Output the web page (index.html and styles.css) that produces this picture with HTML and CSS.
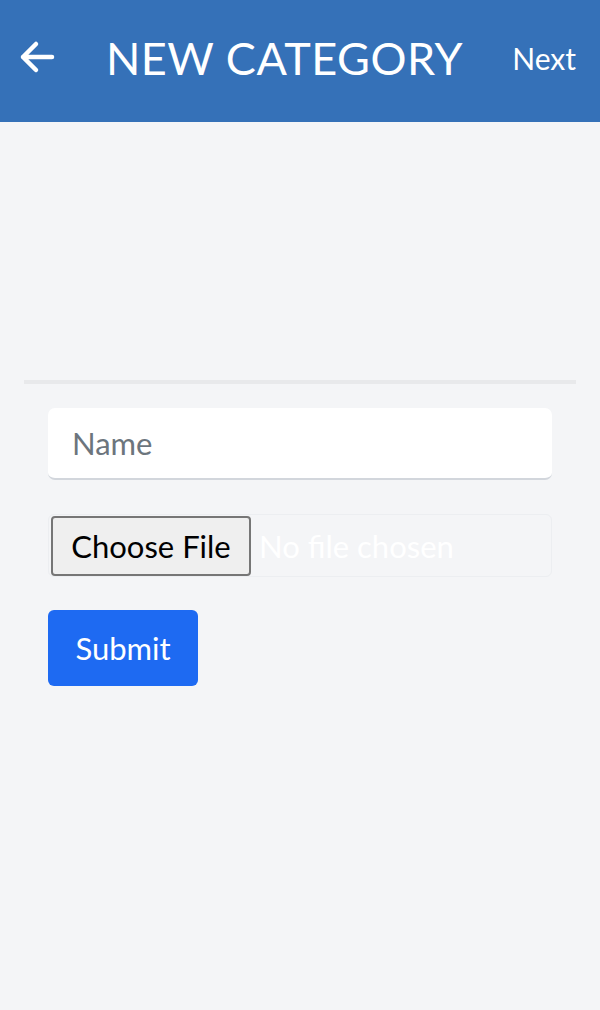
FILE: index.html
```html
<!DOCTYPE html>
<html>
<head>
<meta charset="utf-8">
<link rel="stylesheet" href="styles.css">
</head>
<body>
<header class="topbar">
  <span class="back">
    <svg width="36" height="34" viewBox="0 0 36 34"><path d="M33 17H4M17 4L4 17l13 13" fill="none" stroke="#fff" stroke-width="4.5" stroke-linecap="round" stroke-linejoin="round"/></svg>
  </span>
  <h1 class="title">NEW CATEGORY</h1>
  <span class="next">Next</span>
</header>
<main class="content">
  <div class="spacer"></div>
  <hr class="divider">
  <form class="form">
    <div class="field"><span class="placeholder">Name</span></div>
    <div class="file">
      <span class="file-btn">Choose File</span>
      <span class="file-text">No file chosen</span>
    </div>
    <div><span class="submit">Submit</span></div>
  </form>
</main>
</body>
</html>
```
FILE: styles.css
```css
html, body { margin: 0; padding: 0; }
body {
  background: #f4f5f7;
  font-family: Lato, "Open Sans", sans-serif;
  width: 600px;
  height: 1010px;
}
.topbar {
  height: 122px;
  background: #3571b8;
  display: flex;
  align-items: center;
  padding: 0 24px 0 19px;
  box-sizing: border-box;
  color: #fff;
}
.back { display: flex; width: 36px; height: 34px; margin-top: -8px; }
.title {
  margin: -6px 0 0 51px;
  font-weight: 400;
  font-size: 45px;
  letter-spacing: 0.5px;
  flex: 1;
}
.next { font-size: 30px; margin-top: -6px; }
.content { padding: 0 24px; }
.spacer { height: 258px; }
.divider {
  margin: 0;
  border: 0;
  height: 4px;
  background: #e8e9eb;
}
.form {
  padding: 24px 24px 0;
  display: flex;
  flex-direction: column;
}
.field {
  height: 70px;
  background: #fff;
  border-radius: 7px;
  border-bottom: 2px solid #d2d6dc;
  display: flex;
  align-items: center;
  padding-left: 24px;
}
.placeholder { font-size: 31px; color: #6c757d; }
.file {
  margin-top: 34px;
  height: 63px;
  border: 1px solid #eceef1;
  border-radius: 6px;
  box-sizing: border-box;
  display: flex;
  align-items: center;
  padding-left: 2px;
}
.file-btn {
  width: 200px;
  height: 60px;
  box-sizing: border-box;
  background: #efefef;
  border: 2px solid #767676;
  border-radius: 4px;
  font-size: 31px;
  color: #000;
  display: flex;
  align-items: center;
  justify-content: center;
}
.file-text { font-size: 31px; color: #fff; margin-left: 8px; }
.submit {
  margin-top: 33px;
  display: inline-flex;
  align-items: center;
  justify-content: center;
  width: 150px;
  height: 76px;
  background: #1e6af2;
  color: #fff;
  border-radius: 6px;
  font-size: 31px;
}
```
